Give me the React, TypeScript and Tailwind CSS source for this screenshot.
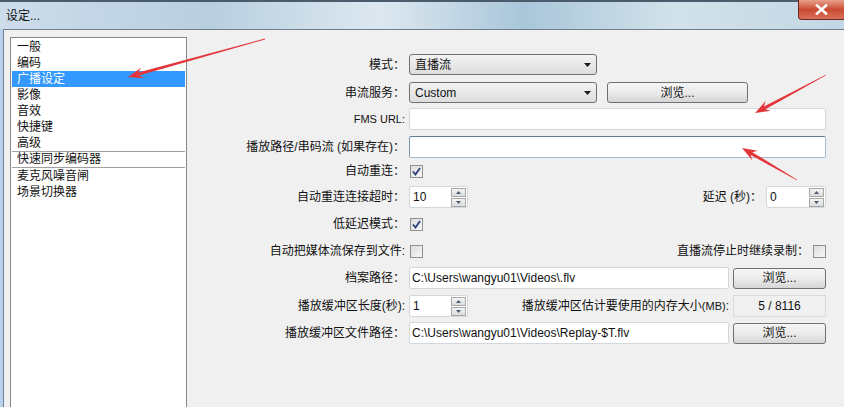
import React from "react";

const FONT = "font-['Liberation_Sans','Noto_Sans_CJK_SC',sans-serif]";

// builds a tapered arrow (tail -> head) as polygon points
function arrowPoints(x1: number, y1: number, x2: number, y2: number) {
    const dx = x2 - x1;
    const dy = y2 - y1;
    const len = Math.sqrt(dx * dx + dy * dy);
    const ux = dx / len;
    const uy = dy / len;
    const nx = -uy;
    const ny = ux;
    const headLen = 15;
    const headW = 5.5;
    const bx = x2 - ux * headLen;
    const by = y2 - uy * headLen;
    const nbx = x2 - ux * (headLen - 4);
    const nby = y2 - uy * (headLen - 4);
    const pts = [
        [x1 + nx * 0.4, y1 + ny * 0.4],
        [nbx + nx * 1.6, nby + ny * 1.6],
        [bx + nx * headW, by + ny * headW],
        [x2, y2],
        [bx - nx * headW, by - ny * headW],
        [nbx - nx * 1.6, nby - ny * 1.6],
        [x1 - nx * 0.4, y1 - ny * 0.4],
    ];
    return pts.map((p) => p.join(",")).join(" ");
}

function DownTriangle() {
    return (
        <svg width="7" height="4" viewBox="0 0 7 4">
            <polygon points="0,0 7,0 3.5,4" fill="#1a1a1a" />
        </svg>
    );
}

function Dropdown({ text }: { text: string }) {
    return (
        <div className="flex h-[21px] w-[188px] items-center justify-between rounded-[3px] border border-[#707070] bg-gradient-to-b from-[#f3f3f3] to-[#dddddd] pl-[5px] pr-[5px] text-[12px]">
            <span>{text}</span>
            <DownTriangle />
        </div>
    );
}

function Button({ className }: { className: string }) {
    return (
        <div className={`flex h-[21px] items-center justify-center rounded-[3px] border border-[#707070] bg-gradient-to-b from-[#f6f6f6] via-[#ebebeb] to-[#d6d6d6] text-[12px] ${className}`}>
            浏览...
        </div>
    );
}

function TextBox({ value, className, focused }: { value?: string; className: string; focused?: boolean }) {
    return (
        <div
            className={`flex h-[22px] items-center rounded-[2px] border bg-white pl-[2px] text-[12px] ${
                focused ? "border-[#a9bccb] border-t-[#5f7d92] border-l-[#7b97ab]" : "border-[#d3d8dd]"
            } ${className}`}
        >
            {value}
        </div>
    );
}

function Checkbox({ checked }: { checked?: boolean }) {
    return (
        <div className="flex h-[13px] w-[13px] items-center justify-center border border-[#8e8f8f] bg-gradient-to-br from-[#dcdcdc] to-[#f8f8f8]">
            {checked && (
                <svg width="9" height="9" viewBox="0 0 9 9">
                    <path d="M1 4.5 L3.5 7.5 L8 1" fill="none" stroke="#2c3f78" strokeWidth="1.8" />
                </svg>
            )}
        </div>
    );
}

function SpinBox({ value, className }: { value: string; className: string }) {
    return (
        <div className={`flex h-[22px] items-center rounded-[2px] border border-[#d3d8dd] bg-white pl-[3px] text-[12px] ${className}`}>
            <span className="flex-1">{value}</span>
            <div className="mr-[1px] flex w-[15px] flex-col gap-[1px]">
                <div className="flex h-[9px] items-center justify-center border border-[#a8a8a8] bg-gradient-to-b from-[#f4f4f4] to-[#dcdcdc]">
                    <svg width="5" height="3" viewBox="0 0 5 3">
                        <polygon points="0,3 5,3 2.5,0" fill="#4a5a70" />
                    </svg>
                </div>
                <div className="flex h-[9px] items-center justify-center border border-[#a8a8a8] bg-gradient-to-b from-[#f4f4f4] to-[#dcdcdc]">
                    <svg width="5" height="3" viewBox="0 0 5 3">
                        <polygon points="0,0 5,0 2.5,3" fill="#4a5a70" />
                    </svg>
                </div>
            </div>
        </div>
    );
}

function Label({ children, small }: { children: React.ReactNode; small?: boolean }) {
    return (
        <div className={`w-[218px] shrink-0 whitespace-nowrap text-right ${small ? "text-[11px]" : "text-[12px]"}`}>
            {children}
        </div>
    );
}

const items = ["一般", "编码", "广播设定", "影像", "音效", "快捷键", "高级"];

export default function App() {
    return (
        <div className={`relative h-[407px] w-[844px] overflow-hidden bg-gradient-to-r from-[#c7d8e7] via-[#d9e6ef] to-[#bcd3e2] text-[#111] ${FONT}`}>
            {/* title bar */}
            <div className="flex h-[29px] items-center border-t-[2px] border-[#4a5b6b] bg-[linear-gradient(to_right,#cddcea_0%,#b8cfe0_25%,#dde8f0_45%,#a9c6da_62%,#d2e2ea_80%,#c3d6e4_100%)] pl-[6px] text-[12px]">
                设定...
            </div>
            <div className="absolute right-0 top-0 flex h-[20px] w-[46px] items-center justify-center rounded-bl-[4px] border border-t-0 border-r-0 border-[#6e2a1e] bg-gradient-to-b from-[#e8a08c] via-[#c94a30] to-[#d9705a]">
                <svg width="13" height="11" viewBox="0 0 13 11">
                    <path d="M2 1.5 L11 9.5 M11 1.5 L2 9.5" stroke="#ffffff" strokeWidth="2.6" strokeLinecap="square" />
                </svg>
            </div>

            <div className="flex h-[378px]">
                <div className="w-[3px] bg-[#b7d1ec]" />
                <div className="flex flex-1 border-l border-t border-[#6f7f8e] bg-[#f0f0f0]">
                    {/* category list */}
                    <div className="ml-[6px] mt-[7px] w-[177px] border border-b-0 border-[#828790] bg-white px-[1px] pt-[1px] text-[12px] leading-[16px]">
                        {items.map((item) => (
                            <div
                                key={item}
                                className={`h-[16px] pl-[5px] ${item === "广播设定" ? "bg-[#3399ff] text-white" : ""}`}
                            >
                                {item}
                            </div>
                        ))}
                        <div className="h-px bg-[#a0a0a0]" />
                        <div className="h-[15px] pl-[5px] leading-[15px]">快速同步编码器</div>
                        <div className="h-px bg-[#a0a0a0]" />
                        <div className="h-[16px] pl-[5px]">麦克风噪音闸</div>
                        <div className="h-[16px] pl-[5px]">场景切换器</div>
                    </div>

                    {/* settings form */}
                    <div className="flex flex-1 flex-col pr-[18px] pt-[24px]">
                        <div className="flex h-[21px] items-center">
                            <Label>模式：</Label>
                            <div className="ml-[4px]">
                                <Dropdown text="直播流" />
                            </div>
                        </div>
                        <div className="mt-[7px] flex h-[21px] items-center">
                            <Label>串流服务：</Label>
                            <div className="ml-[4px]">
                                <Dropdown text="Custom" />
                            </div>
                            <Button className="ml-[10px] w-[141px] h-[20px]" />
                        </div>
                        <div className="mt-[5px] flex h-[22px] items-center">
                            <Label small>FMS URL:</Label>
                            <TextBox className="ml-[4px] flex-1" />
                        </div>
                        <div className="mt-[6px] flex h-[22px] items-center">
                            <Label>播放路径/串码流 (如果存在)：</Label>
                            <TextBox className="ml-[4px] flex-1" focused />
                        </div>
                        <div className="mt-[2px] flex h-[22px] items-center">
                            <Label>自动重连：</Label>
                            <div className="ml-[5px]">
                                <Checkbox checked />
                            </div>
                        </div>
                        <div className="mt-[4px] flex h-[22px] items-center">
                            <Label>自动重连连接超时：</Label>
                            <SpinBox value="10" className="ml-[4px] w-[59px]" />
                            <div className="flex-1" />
                            <div className="whitespace-nowrap text-[12px]">延迟 (秒)：</div>
                            <SpinBox value="0" className="ml-[4px] w-[60px]" />
                        </div>
                        <div className="mt-[5px] flex h-[22px] items-center">
                            <Label>低延迟模式：</Label>
                            <div className="ml-[5px]">
                                <Checkbox checked />
                            </div>
                        </div>
                        <div className="mt-[5px] flex h-[22px] items-center">
                            <Label>自动把媒体流保存到文件:</Label>
                            <div className="ml-[5px]">
                                <Checkbox />
                            </div>
                            <div className="flex-1" />
                            <div className="whitespace-nowrap text-[12px]">直播流停止时继续录制：</div>
                            <div className="ml-[4px]">
                                <Checkbox />
                            </div>
                        </div>
                        <div className="mt-[5px] flex h-[22px] items-center">
                            <Label>档案路径：</Label>
                            <TextBox value="C:\Users\wangyu01\Videos\.flv" className="ml-[4px] w-[320px]" />
                            <Button className="ml-[4px] w-[93px]" />
                        </div>
                        <div className="mt-[6px] flex h-[22px] items-center">
                            <Label>播放缓冲区长度(秒):</Label>
                            <SpinBox value="1" className="ml-[4px] w-[59px]" />
                            <div className="flex-1" />
                            <div className="whitespace-nowrap text-[12px]">
                                播放缓冲区估计要使用的内存大小<span className="text-[11px]">(MB)</span>:
                            </div>
                            <div className="ml-[4px] flex h-[22px] w-[93px] items-center justify-center border border-[#dadada] bg-[#f0f0f0] text-[12px]">
                                5 / 8116
                            </div>
                        </div>
                        <div className="mt-[5px] flex h-[22px] items-center">
                            <Label>播放缓冲区文件路径：</Label>
                            <TextBox value="C:\Users\wangyu01\Videos\Replay-$T.flv" className="ml-[4px] w-[320px]" />
                            <Button className="ml-[4px] w-[93px]" />
                        </div>
                    </div>
                </div>
            </div>

            {/* annotation arrows */}
            <svg className="pointer-events-none absolute left-0 top-0" width="844" height="407">
                <polygon points={arrowPoints(265, 39, 128, 77)} fill="#e2363a" />
                <polygon points={arrowPoints(826, 75, 755, 113)} fill="#e2363a" />
                <polygon points={arrowPoints(797, 180, 742, 148)} fill="#e2363a" />
            </svg>
        </div>
    );
}
